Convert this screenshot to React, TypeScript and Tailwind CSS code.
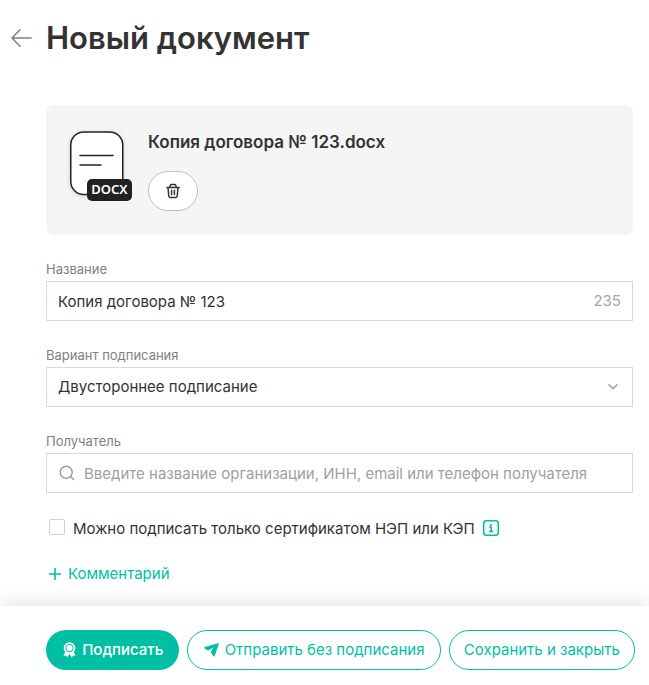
import { useState } from "react";
import type { ReactNode } from "react";

function Field({ id, label, children }: { id: string; label: string; children: ReactNode }) {
  return (
    <div>
      <label htmlFor={id} className="block text-[13px] leading-4 text-[#808080] mb-1">{label}</label>
      <div className="flex items-center h-10 border border-[#d9d9d9] bg-white">{children}</div>
    </div>
  );
}

function DocumentIcon() {
  return (
    <div className="relative w-[62px] h-[70px] shrink-0">
      <svg viewBox="0 0 62 70" fill="none" className="w-full h-full drop-shadow-sm" aria-hidden="true">
        <rect x="0.75" y="1" width="52" height="62.5" rx="13" fill="#fff" stroke="#222" strokeWidth="1.5" />
        <path d="M10 24.5h33M10 34h21" stroke="#222" strokeWidth="1.5" strokeLinecap="round" />
      </svg>
      <span className="absolute right-0 bottom-0 w-[45px] h-[22px] rounded-[5px] bg-[#222] text-white text-[13px] leading-5 text-center font-semibold font-['Noto_Sans',sans-serif]">DOCX</span>
    </div>
  );
}

function TrashIcon() {
  return (
    <svg viewBox="0 0 16 16" fill="none" stroke="#333" strokeWidth="1.5" strokeLinecap="round" strokeLinejoin="round" className="w-4 h-4" aria-hidden="true">
      <path d="M1.9 4.4h12.2M4.9 4.2l.3-1.8c.1-.6.5-.9 1-.9h3.6c.5 0 .9.3 1 .9l.3 1.8M3 4.7l.8 8.3c.1.9.6 1.4 1.4 1.4h5.6c.8 0 1.3-.5 1.4-1.4l.8-8.3M6.6 7.3v4.2M9.4 7.3v4.2" />
    </svg>
  );
}

function AwardIcon() {
  return (
    <svg viewBox="0 0 14 17" className="w-[13px] h-4 shrink-0" aria-hidden="true">
      <path d="M3 9L.6 14.6l2.5-.1 1.5 2.2L7 12.6l2.4 4.1 1.5-2.2 2.5.1L11 9z" fill="#fff" />
      <circle cx="7" cy="6.4" r="6.3" fill="#fff" />
      <circle cx="7" cy="6.4" r="3.9" fill="none" stroke="#00bfa5" strokeWidth="1.1" />
    </svg>
  );
}

function SendIcon() {
  return (
    <svg viewBox="0 0 15 14" className="w-[15px] h-[14px] shrink-0" aria-hidden="true">
      <path d="M14 .2L.9 3.9c-.8.2-.9 1.1-.3 1.5l3.2 2c.3.2.7.2 1-.1L9.3 4.5 6.9 8.4c-.2.3-.1.7.1 1l2.3 3.7c.4.6 1.2.5 1.4-.2L14.8 1c.1-.5-.3-.9-.8-.8z" fill="#00bfa5" />
    </svg>
  );
}

export default function App() {
  const [name, setName] = useState("Копия договора № 123");

  return (
    <div className="min-h-screen flex flex-col bg-white text-[#333] font-[Inter,sans-serif] text-[15px]">
      <header className="flex items-center gap-[14px] pl-[11px] pr-4 pt-[18px]">
        <button type="button" aria-label="Назад" className="flex items-center">
          <svg viewBox="0 0 21 20" fill="none" stroke="#808080" strokeWidth="1.5" strokeLinecap="round" className="w-[21px] h-5" aria-hidden="true">
            <path d="M20.2 10H1M9 1.8L1 10l8 8.2" />
          </svg>
        </button>
        <h1 className="text-[31px] leading-10 font-semibold">Новый документ</h1>
      </header>

      <main className="flex-1 pl-[46px] pr-4 pt-[47px]">
        <section className="flex gap-4 rounded-lg bg-[#f5f5f5] px-6 pt-[26px] pb-6">
          <DocumentIcon />
          <div>
            <h2 className="text-[17px] leading-6 -mt-px font-semibold">Копия договора № 123.docx</h2>
            <button type="button" aria-label="Удалить" className="mt-[17px] w-[50px] h-10 rounded-full border border-[#bfbfbf] bg-white flex items-center justify-center">
              <TrashIcon />
            </button>
          </div>
        </section>

        <form id="document" className="mt-[26px]">
          <div className="space-y-[26px]">
            <Field id="name" label="Название">
              <input id="name" value={name} onChange={(e) => setName(e.target.value)} className="flex-1 min-w-0 h-full px-[11px] outline-none" />
              <span className="pr-[11px] text-[#a6a6a6]">{255 - name.length}</span>
            </Field>
            <Field id="variant" label="Вариант подписания">
              <select id="variant" className="flex-1 min-w-0 h-full px-[11px] appearance-none outline-none">
                <option>Двустороннее подписание</option>
              </select>
              <svg viewBox="0 0 10 6" fill="none" stroke="#999" strokeWidth="1.4" strokeLinecap="round" strokeLinejoin="round" className="w-[10px] h-[6px] mr-[14px] pointer-events-none" aria-hidden="true">
                <path d="M1 .8l4 4 4-4" />
              </svg>
            </Field>
            <Field id="recipient" label="Получатель">
              <svg viewBox="0 0 16 16" fill="none" stroke="#999" strokeWidth="1.4" strokeLinecap="round" className="w-4 h-4 ml-3" aria-hidden="true">
                <circle cx="7.2" cy="7.2" r="6" />
                <path d="M11.6 11.6l3 3" />
              </svg>
              <input id="recipient" placeholder="Введите название организации, ИНН, email или телефон получателя" className="flex-1 min-w-0 h-full px-[9px] outline-none placeholder:text-[#a0a0a0]" />
            </Field>
          </div>

          <div className="flex items-center gap-2 mt-6 ml-[3px]">
            <input id="cert" type="checkbox" className="appearance-none w-4 h-4 shrink-0 border border-[#d0d0d0] rounded-[2px] bg-white mb-1 checked:bg-[#00bfa5]" />
            <label htmlFor="cert" className="leading-6">Можно подписать только сертификатом НЭП или КЭП</label>
            <button type="button" aria-label="Подробнее" className="mb-[2px]">
              <svg viewBox="0 0 16 16" fill="none" stroke="#00bfa5" strokeWidth="1.5" className="block w-4 h-4" aria-hidden="true">
                <rect x="0.75" y="0.75" width="14.5" height="14.5" rx="2.5" />
                <path d="M6 7h2.2v4.5M6 11.5h4.2M7 4.7h2" />
              </svg>
            </button>
          </div>

          <button type="button" className="flex items-center gap-[7px] mt-[21px] mb-4 ml-[3px] text-[#00bfa5] leading-6">
            <svg viewBox="0 0 12 12" stroke="#00bfa5" strokeWidth="1.6" className="w-3 h-3" aria-hidden="true">
              <path d="M6 0v12M0 6h12" />
            </svg>
            Комментарий
          </button>
        </form>
      </main>

      <footer className="sticky bottom-0 bg-white flex gap-2 pl-[46px] pr-[14px] pt-6 pb-[15px] whitespace-nowrap shadow-[0_0_20px_rgba(0,0,0,0.15)]">
        <button type="submit" form="document" className="h-10 pl-[17px] pr-4 flex items-center justify-center gap-[6px] grow rounded-full bg-[#00bfa5] text-white font-medium">
          <AwardIcon />
          Подписать
        </button>
        <button type="button" className="h-10 px-[15px] flex items-center justify-center gap-[6px] grow rounded-full border border-[#00bfa5] text-[#00bfa5]">
          <SendIcon />
          Отправить без подписания
        </button>
        <button type="button" className="h-10 px-[14px] grow rounded-full border border-[#00bfa5] text-[#00bfa5]">Сохранить и закрыть</button>
      </footer>
    </div>
  );
}
